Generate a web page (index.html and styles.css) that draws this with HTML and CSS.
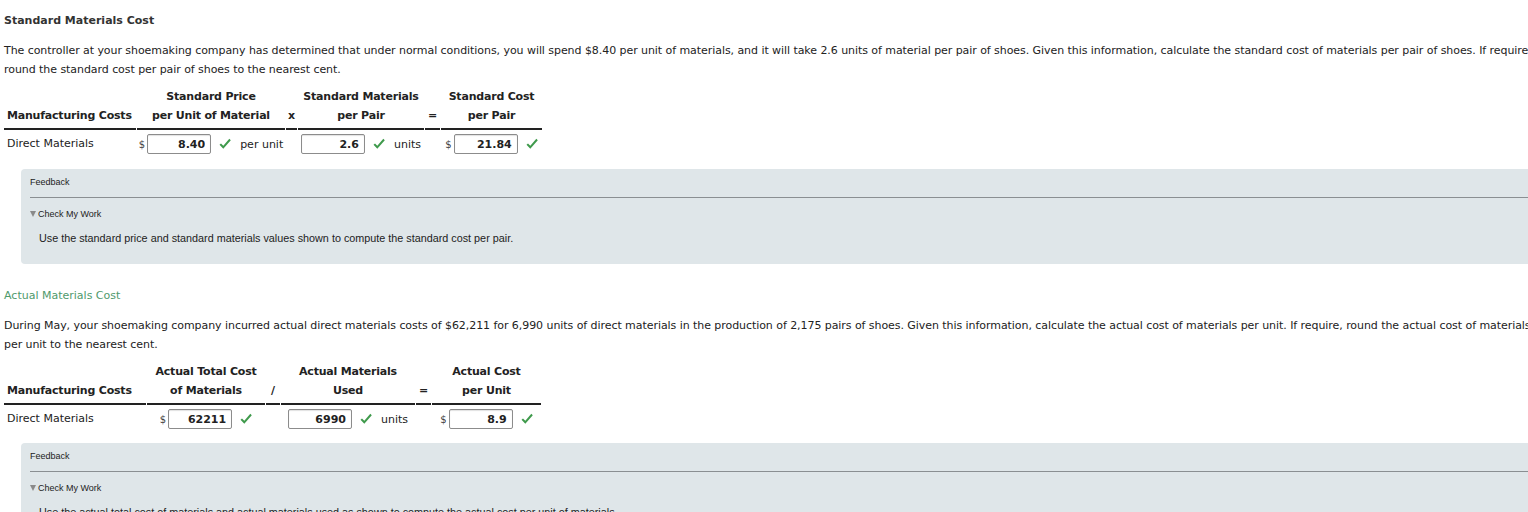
FILE: index.html
```html
<!DOCTYPE html>
<html lang="en">
<head>
    <meta charset="utf-8">
    <title>Standard and Actual Materials Cost</title>
    <link rel="stylesheet" href="styles.css">
</head>
<body>
<div class="page">

    <h3 class="q-title">Standard Materials Cost</h3>
    <p class="q-text">The controller at your shoemaking company has determined that under normal conditions, you will spend $8.40 per unit of materials, and it will take 2.6 units of material per pair of shoes. Given this information, calculate the standard cost of materials per pair of shoes. If required, round the standard cost per pair of shoes to the nearest cent.</p>

    <table class="calc calc--std">
        <colgroup>
            <col class="c1"><col class="c2"><col class="c3"><col class="c4"><col class="c5"><col class="c6">
        </colgroup>
        <thead>
            <tr>
                <th></th>
                <th>Standard Price</th>
                <th></th>
                <th>Standard Materials</th>
                <th></th>
                <th>Standard Cost</th>
            </tr>
            <tr class="under">
                <th class="label">Manufacturing Costs</th>
                <th>per Unit of Material</th>
                <th>x</th>
                <th>per Pair</th>
                <th>=</th>
                <th>per Pair</th>
            </tr>
        </thead>
        <tbody>
            <tr>
                <td class="label">Direct Materials</td>
                <td>
                    <span class="entry">
                        <span class="cur">$</span><input class="field" type="text" value="8.40">
                        <svg class="ok" viewBox="0 0 12 12"><path d="M0.5 6.8 L2 5.4 L4.3 7.8 L10.3 0.8 L11.8 2.2 L4.3 10.8 Z"/></svg>
                        <span class="unit">per unit</span>
                    </span>
                </td>
                <td></td>
                <td>
                    <span class="entry">
                        <input class="field" type="text" value="2.6">
                        <svg class="ok" viewBox="0 0 12 12"><path d="M0.5 6.8 L2 5.4 L4.3 7.8 L10.3 0.8 L11.8 2.2 L4.3 10.8 Z"/></svg>
                        <span class="unit">units</span>
                    </span>
                </td>
                <td></td>
                <td>
                    <span class="entry">
                        <span class="cur">$</span><input class="field" type="text" value="21.84">
                        <svg class="ok" viewBox="0 0 12 12"><path d="M0.5 6.8 L2 5.4 L4.3 7.8 L10.3 0.8 L11.8 2.2 L4.3 10.8 Z"/></svg>
                    </span>
                </td>
            </tr>
        </tbody>
    </table>

    <div class="feedback">
        <div class="feedback-head">Feedback</div>
        <div class="feedback-toggle"><span class="tri"></span>Check My Work</div>
        <p class="feedback-text">Use the standard price and standard materials values shown to compute the standard cost per pair.</p>
    </div>

    <h3 class="q-title q-title--next">Actual Materials Cost</h3>
    <p class="q-text">During May, your shoemaking company incurred actual direct materials costs of $62,211 for 6,990 units of direct materials in the production of 2,175 pairs of shoes. Given this information, calculate the actual cost of materials per unit. If require, round the actual cost of materials per unit to the nearest cent.</p>

    <table class="calc calc--act">
        <colgroup>
            <col class="c1"><col class="c2"><col class="c3"><col class="c4"><col class="c5"><col class="c6">
        </colgroup>
        <thead>
            <tr>
                <th></th>
                <th>Actual Total Cost</th>
                <th></th>
                <th>Actual Materials</th>
                <th></th>
                <th>Actual Cost</th>
            </tr>
            <tr class="under">
                <th class="label">Manufacturing Costs</th>
                <th>of Materials</th>
                <th>/</th>
                <th>Used</th>
                <th>=</th>
                <th>per Unit</th>
            </tr>
        </thead>
        <tbody>
            <tr>
                <td class="label">Direct Materials</td>
                <td>
                    <span class="entry">
                        <span class="cur">$</span><input class="field" type="text" value="62211">
                        <svg class="ok" viewBox="0 0 12 12"><path d="M0.5 6.8 L2 5.4 L4.3 7.8 L10.3 0.8 L11.8 2.2 L4.3 10.8 Z"/></svg>
                    </span>
                </td>
                <td></td>
                <td>
                    <span class="entry">
                        <input class="field" type="text" value="6990">
                        <svg class="ok" viewBox="0 0 12 12"><path d="M0.5 6.8 L2 5.4 L4.3 7.8 L10.3 0.8 L11.8 2.2 L4.3 10.8 Z"/></svg>
                        <span class="unit">units</span>
                    </span>
                </td>
                <td></td>
                <td>
                    <span class="entry">
                        <span class="cur">$</span><input class="field" type="text" value="8.9">
                        <svg class="ok" viewBox="0 0 12 12"><path d="M0.5 6.8 L2 5.4 L4.3 7.8 L10.3 0.8 L11.8 2.2 L4.3 10.8 Z"/></svg>
                    </span>
                </td>
            </tr>
        </tbody>
    </table>

    <div class="feedback">
        <div class="feedback-head">Feedback</div>
        <div class="feedback-toggle"><span class="tri"></span>Check My Work</div>
        <p class="feedback-text">Use the actual total cost of materials and actual materials used as shown to compute the actual cost per unit of materials.</p>
    </div>

</div>
</body>
</html>
```

FILE: styles.css
```css
html, body {
    margin: 0;
    padding: 0;
    overflow: hidden;
    background: #fff;
}
.page {
    width: 1546px;
    padding: 11px 0 0 4px;
    font-family: "DejaVu Sans", Verdana, sans-serif;
    font-size: 11px;
    color: #222;
}
.q-title {
    margin: 0;
    font-size: 11px;
    line-height: 19px;
    font-weight: bold;
    color: #333;
}
.q-title--next {
    font-weight: normal;
    color: #4f9a6c;
}
.q-text {
    margin: 11px 0 0;
    line-height: 19px;
    letter-spacing: -0.06px;
}

/* calculation tables */
.calc {
    margin: 8px 0 0 -1px;
    border-collapse: separate;
    border-spacing: 1px 0;
    table-layout: fixed;
}
.calc th {
    padding: 0;
    line-height: 19px;
    font-weight: bold;
    letter-spacing: -0.2px;
    text-align: center;
    vertical-align: bottom;
    white-space: nowrap;
}
.calc .under th {
    padding-bottom: 3px;
    border-bottom: 2px solid #222;
}
.calc .label {
    text-align: left;
    padding-left: 3px;
}
.calc td {
    padding: 4px 0 0;
    text-align: center;
    white-space: nowrap;
}
.calc td.label {
    line-height: 20px;
}
.calc--std .c1 { width: 132px; }
.calc--std .c2 { width: 148px; }
.calc--std .c3 { width: 11px; }
.calc--std .c4 { width: 126px; }
.calc--std .c5 { width: 15px; }
.calc--std .c6 { width: 101px; }
.calc--act .c1 { width: 142px; }
.calc--act .c2 { width: 118px; }
.calc--act .c3 { width: 14px; }
.calc--act .c4 { width: 134px; }
.calc--act .c5 { width: 15px; }
.calc--act .c6 { width: 109px; }

.entry {
    display: inline-flex;
    align-items: center;
    gap: 8px;
    vertical-align: top;
}
.cur {
    margin-right: -6px;
    font-size: 10px;
    color: #444;
}
.field {
    box-sizing: border-box;
    width: 64px;
    height: 20px;
    margin: 0;
    padding: 0 5px 0 0;
    border: 1px solid #8c8c8c;
    border-radius: 2px;
    box-shadow: inset 0 1px 1px rgba(0, 0, 0, 0.12);
    background: #fff;
    font-family: "DejaVu Sans", Verdana, sans-serif;
    font-size: 11px;
    font-weight: bold;
    color: #222;
    text-align: right;
}
.ok {
    width: 12px;
    height: 12px;
    fill: #3f9a4c;
}
.unit {
    margin-left: 1px;
}

/* feedback panel */
.feedback {
    margin: 15px 0 0 17px;
    padding: 6px 0 18px 9px;
    background: #dfe6e9;
    border-radius: 4px 0 0 4px;
    font-family: "Liberation Sans", Arial, sans-serif;
    color: #222;
}
.feedback + .q-title {
    margin-top: 22px;
}
.calc--act + .feedback {
    margin-top: 14px;
}
.feedback-head {
    font-size: 9px;
    line-height: 14px;
    padding-bottom: 8px;
    border-bottom: 1px solid #8a8f92;
}
.feedback-toggle {
    margin-top: 9px;
    font-size: 9px;
    line-height: 14px;
    display: flex;
    align-items: center;
}
.tri {
    width: 0;
    height: 0;
    margin-right: 2px;
    border-left: 3px solid transparent;
    border-right: 3px solid transparent;
    border-top: 6px solid #8a8a8a;
}
.feedback-text {
    margin: 9px 0 0 9px;
    font-size: 10.8px;
    line-height: 16px;
}
```
